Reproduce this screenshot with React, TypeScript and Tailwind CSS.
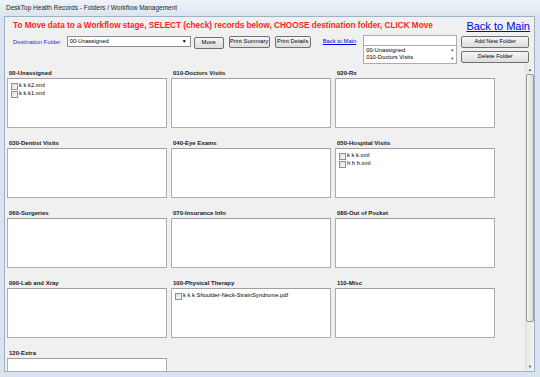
import React from 'react';

type Folder = { name: string; items?: string[] };

const folders: Folder[] = [
  { name: '00-Unassigned', items: ['k k k2.xml', 'k k k1.xml'] },
  { name: '010-Doctors Visits' },
  { name: '020-Rx' },
  { name: '030-Dentist Visits' },
  { name: '040-Eye Exams' },
  { name: '050-Hospital Visits', items: ['k k k.xml', 'h h h.xml'] },
  { name: '060-Surgeries' },
  { name: '070-Insurance Info' },
  { name: '080-Out of Pocket' },
  { name: '090-Lab and Xray' },
  { name: '100-Physical Therapy', items: ['k k k Shoulder-Neck-StrainSyndrome.pdf'] },
  { name: '110-Misc' },
  { name: '120-Extra' },
];

const btn =
  'h-[12px] flex items-center justify-center whitespace-nowrap rounded-[2px] border border-[#707070] bg-gradient-to-b from-[#f6f6f6] to-[#dddddd] text-[5.8px] text-black leading-none';

const Check = () => (
  <span className="w-[7px] h-[7px] shrink-0 border border-[#8e8f8f] bg-gradient-to-br from-[#dcdcdc] to-[#fbfbfb]" />
);

const FolderBox = ({ folder }: { folder: Folder }) => (
  <div className="flex flex-col">
    <div className="h-[12px] flex items-end pb-[2px] pl-[2px] text-[6px] font-bold text-[#1a1a1a] leading-none">
      {folder.name}
    </div>
    <div className="h-[50px] bg-white border border-[#abadb3] border-t-[#a0a0a0] pt-[3px] pl-[3px]">
      {(folder.items || []).map((it) => (
        <div key={it} className="h-[8px] flex items-center gap-[1px] text-[5.8px] text-black leading-none">
          <Check />
          <span>{it}</span>
        </div>
      ))}
    </div>
  </div>
);

export default function App() {
  return (
    <div className="w-[540px] h-[377px] overflow-hidden flex flex-col bg-[#d9e4f0] font-['Liberation_Sans',Arial,sans-serif]">
      {/* title bar */}
      <div className="h-[16px] shrink-0 flex items-center pl-[6px] bg-gradient-to-b from-[#eef3f8] to-[#dbe5f0] text-[6.5px] text-[#1e1e1e]">
        DeskTop Health Records - Folders / Workflow Management
      </div>

      <div className="flex-1 min-h-0 mx-[4px] mb-[5px] mr-[5px] flex flex-col bg-[#f0f0f0] border border-[#9fb1c4]">
        {/* heading row */}
        <div className="h-[18px] shrink-0 flex items-start">
          <div className="pl-[8px] pt-[5px] text-[8.2px] font-bold text-[#ff1f1f] leading-none">
            To Move data to a Workflow stage, SELECT (check) records below, CHOOSE destination folder, CLICK Move
          </div>
          <a className="ml-auto mr-[4px] mt-[4px] text-[11px] text-[#0000ee] underline leading-none">Back to Main</a>
        </div>

        {/* controls row */}
        <div className="h-[30px] shrink-0 flex items-start">
          <div className="pl-[8px] pt-[5px] text-[5.8px] text-[#2b2bd9] leading-none">Destination Folder:</div>
          <div className="ml-[5px] mt-[1px] w-[124px] h-[11px] flex items-center justify-between bg-white border border-[#8d8d8d] pl-[2px] pr-[3px] text-[5.8px] leading-none">
            <span>00-Unassigned</span>
            <span className="text-[5px]">▼</span>
          </div>
          <div className={`${btn} ml-[3px] mt-[2px] w-[30px]`}>Move</div>
          <div className={`${btn} ml-[5px] mt-[1px] w-[41px]`}>Print Summary</div>
          <div className={`${btn} ml-[5px] mt-[1px] w-[36px]`}>Print Details</div>
          <a className="ml-[12px] mt-[4px] text-[5.8px] text-[#0000ee] underline leading-none">Back to Main</a>
          <div className="ml-[7px] flex flex-col w-[94px]">
            <div className="h-[11px] bg-white border border-[#abadb3]" />
            <div className="h-[18px] flex bg-white border border-[#abadb3] border-t-0">
              <div className="flex-1 pl-[2px] pt-[1px] text-[5.8px] leading-[7px]">
                <div>00-Unassigned</div>
                <div>010-Doctors Visits</div>
              </div>
              <div className="w-[8px] flex flex-col justify-between items-center text-[4px] text-[#555] py-[1px]">
                <span>▲</span>
                <span>▼</span>
              </div>
            </div>
          </div>
          <div className="ml-[4px] flex flex-col gap-[3px] pt-[1px]">
            <div className={`${btn} w-[68px]`}>Add New Folder</div>
            <div className={`${btn} w-[68px]`}>Delete Folder</div>
          </div>
        </div>

        {/* folders + scrollbar */}
        <div className="flex-1 min-h-0 flex">
          <div className="flex-1 min-w-0 overflow-hidden pl-[2px] pt-[1px]">
            <div className="grid grid-cols-[160px_160px_160px] gap-x-[4px] gap-y-[8px]">
              {folders.map((f) => (
                <FolderBox key={f.name} folder={f} />
              ))}
            </div>
          </div>
          <div className="w-[9px] shrink-0 flex flex-col items-center bg-gradient-to-r from-[#e6e6e6] to-[#f4f4f4] border-l border-[#e0e0e0]">
            <div className="h-[9px] text-[4px] text-[#444] flex items-center">▲</div>
            <div className="w-[8px] h-[248px] rounded-[2px] border border-[#9a9a9a] bg-gradient-to-r from-[#f3f3f3] to-[#dcdcdc]" />
            <div className="flex-1" />
            <div className="h-[9px] text-[4px] text-[#444] flex items-center">▼</div>
          </div>
        </div>
      </div>
    </div>
  );
}
